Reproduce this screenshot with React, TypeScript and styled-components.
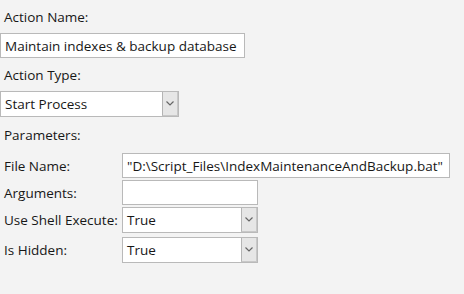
import styled, { createGlobalStyle } from "styled-components";

const GlobalStyle = createGlobalStyle`
  html, body {
    margin: 0;
    padding: 0;
    background: #f3f3f3;
  }
  body {
    font-family: "Open Sans", "Liberation Sans", sans-serif;
    font-size: 13.5px;
    color: #171717;
  }
`;

const Form = styled.div`
  width: 464px;
  height: 294px;
  display: flex;
  flex-direction: column;
`;

const Label = styled.div<{ $h: number }>`
  height: ${p => p.$h}px;
  padding-left: 4px;
  display: flex;
  align-items: center;
  white-space: nowrap;
`;

const TextBox = styled.div<{ $w: number }>`
  box-sizing: border-box;
  width: ${p => p.$w}px;
  height: 25px;
  background: #fff;
  border: 1px solid #b9b9b9;
  padding: 0 4px;
  display: flex;
  align-items: center;
  white-space: nowrap;
  overflow: hidden;
`;

const Select = styled.div<{ $w: number }>`
  box-sizing: border-box;
  width: ${p => p.$w}px;
  height: 26px;
  background: #fff;
  border: 1px solid #b9b9b9;
  padding-left: 4px;
  display: flex;
  align-items: center;
  justify-content: space-between;
`;

const DropButton = styled.div`
  box-sizing: border-box;
  width: 16px;
  height: 24px;
  background: #e6e6e6;
  border-left: 1px solid #b4b4b4;
  border-right: 1px solid #c8c8c8;
  border-bottom: 1px solid #c8c8c8;
  display: flex;
  align-items: center;
  justify-content: center;
`;

const ParamGrid = styled.div`
  display: grid;
  grid-template-columns: 122px 1fr;
  align-items: center;
`;

const Cell = styled.div<{ $mt: number }>`
  margin-top: ${p => p.$mt}px;
`;

function Chevron() {
  return (
    <svg width="8" height="5" viewBox="0 0 8 5">
      <path d="M0.5 0.5 L4 4 L7.5 0.5" fill="none" stroke="#666" strokeWidth="1.2" />
    </svg>
  );
}

function Dropdown({ value, width }: { value: string; width: number }) {
  return (
    <Select $w={width}>
      <span>{value}</span>
      <DropButton>
        <Chevron />
      </DropButton>
    </Select>
  );
}

const params = [
  { label: "File Name:", kind: "text", value: "\"D:\\Script_Files\\IndexMaintenanceAndBackup.bat\"", w: 328, mt: 0 },
  { label: "Arguments:", kind: "text", value: "", w: 136, mt: 2 },
  { label: "Use Shell Execute:", kind: "select", value: "True", w: 136, mt: 2 },
  { label: "Is Hidden:", kind: "select", value: "True", w: 136, mt: 4 },
];

export default function App() {
  return (
    <Form>
      <GlobalStyle />
      <Label $h={33}>Action Name:</Label>
      <TextBox $w={245}>Maintain indexes &amp; backup database</TextBox>
      <Label $h={33}>Action Type:</Label>
      <Dropdown value="Start Process" width={179} />
      <Label $h={36}>Parameters:</Label>
      <ParamGrid>
        {params.flatMap(p => [
          <Cell key={p.label + "-l"} $mt={p.mt}>
            <Label $h={p.kind === "select" ? 26 : 25}>{p.label}</Label>
          </Cell>,
          <Cell key={p.label + "-v"} $mt={p.mt}>
            {p.kind === "text" ? (
              <TextBox $w={p.w}>{p.value}</TextBox>
            ) : (
              <Dropdown value={p.value} width={p.w} />
            )}
          </Cell>,
        ])}
      </ParamGrid>
    </Form>
  );
}
